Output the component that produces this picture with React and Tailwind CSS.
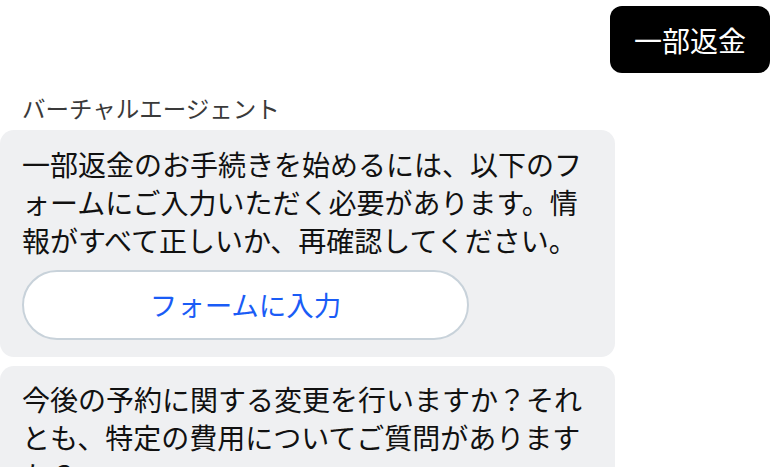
import React from 'react'

const font = { fontFamily: '"Noto Sans CJK JP", "Noto Sans", sans-serif' }

export default function App() {
  return (
    <div className="w-[780px] h-[467px] overflow-hidden bg-white" style={font}>
      {/* user message */}
      <div className="flex justify-end pt-[6px] pr-[10px]">
        <div className="bg-black text-white rounded-[12px] h-[67px] px-[24px] flex items-center text-[28px] leading-none">
          一部返金
        </div>
      </div>

      {/* agent name */}
      <div className="pl-[22px] pt-[20px] text-[23.5px] leading-[30px] text-[#3a3a3a]">
        バーチャルエージェント
      </div>

      {/* agent messages */}
      <div className="flex flex-col gap-[9px] mt-[7px]">
        <div className="w-[615px] bg-[#eff0f2] rounded-[14px] pl-[22px] pr-[22px] pt-[15px] pb-[17px]">
          <p className="text-[28px] leading-[38px] text-[#111]">
            一部返金のお手続きを始めるには、以下のフォームにご入力いただく必要があります。情報がすべて正しいか、再確認してください。
          </p>
          <button className="mt-[11px] w-[447px] h-[70px] rounded-full bg-white border-2 border-[#c8d2da] text-[#1a5cf6] text-[27.5px] leading-none">
            フォームに入力
          </button>
        </div>
        <div className="w-[615px] bg-[#eff0f2] rounded-[14px] pl-[22px] pr-[22px] pt-[14px] pb-[17px]">
          <p className="text-[28px] leading-[38px] text-[#111]">
            今後の予約に関する変更を行いますか？それとも、特定の費用についてご質問がありますか？
          </p>
        </div>
      </div>
    </div>
  )
}
